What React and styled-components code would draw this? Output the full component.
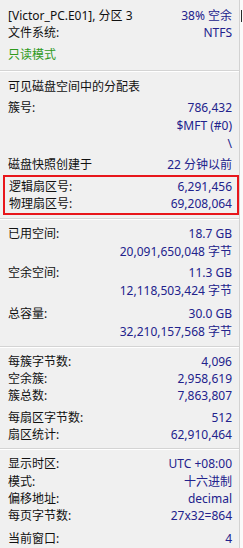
import React from "react";
import styled, { createGlobalStyle } from "styled-components";

const Global = createGlobalStyle`
  html, body { margin: 0; padding: 0; background: #f0f0f0; }
  body { font-family: "Noto Sans", "Noto Sans CJK SC", sans-serif; }
`;

const Page = styled.div`
  display: flex;
  width: 243px;
  height: 548px;
  overflow: hidden;
  background: #fafafa;
`;

const Panel = styled.div`
  width: 239px;
  flex: none;
  background: #f0f0f0;
  border-right: 1px solid #d2d2d2;
  padding-top: 7px;
  box-sizing: content-box;
  display: flex;
  flex-direction: column;
`;

const Strip = styled.div`
  flex: 1;
  display: flex;
  justify-content: center;
`;

const Caret = styled.div`
  width: 1px;
  height: 12px;
  margin-top: 10px;
  background: #2a2a2a;
`;

const Row = styled.div`
  display: flex;
  justify-content: space-between;
  align-items: center;
  height: 17px;
  line-height: 17px;
  font-size: 12px;
  padding: 0 7px 0 8px;
  margin-top: ${(p) => p.$gap || 0}px;
  white-space: nowrap;
`;

const Label = styled.span`
  color: ${(p) => (p.$green ? "#2f9a1c" : "#111")};
`;

const Value = styled.span`
  color: #22228c;
`;

const Sep = styled.div`
  height: 0;
  border-top: 1px solid #d4d4d4;
  border-bottom: 1px solid #ffffff;
  margin-top: ${(p) => p.$gap || 0}px;
`;

const Box = styled.div`
  margin: 2px 0 0 3px;
  border: 2px solid #e8161b;
  padding: 1px 0;
  ${Row} {
    padding: 0 5px 0 4px;
  }
`;

const Line = ({ label, value, gap, green }) => (
  <Row $gap={gap}>
    <Label $green={green}>{label}</Label>
    {value !== undefined && <Value>{value}</Value>}
  </Row>
);

export default function App() {
  return (
    <>
      <Global />
      <Page>
        <Panel>
          <Line label="[Victor_PC.E01], 分区 3" value="38% 空余" />
          <Line label="文件系统:" value="NTFS" />
          <Line label="只读模式" green gap={5} />
          <Sep $gap={7} />
          <Line label="可见磁盘空间中的分配表" gap={6} />
          <Line label="簇号:" value="786,432" gap={4} />
          <Line label="" value="$MFT (#0)" gap={1} />
          <Line label="" value="\" gap={1} />
          <Line label="磁盘快照创建于" value="22 分钟以前" gap={4} />
          <Box>
            <Line label="逻辑扇区号:" value="6,291,456" />
            <Line label="物理扇区号:" value="69,208,064" />
          </Box>
          <Sep $gap={3} />
          <Line label="已用空间:" value="18.7 GB" gap={5} />
          <Line label="" value="20,091,650,048 字节" gap={1} />
          <Line label="空余空间:" value="11.3 GB" gap={4} />
          <Line label="" value="12,118,503,424 字节" gap={1} />
          <Line label="总容量:" value="30.0 GB" gap={6} />
          <Line label="" value="32,210,157,568 字节" gap={1} />
          <Sep $gap={6} />
          <Line label="每簇字节数:" value="4,096" gap={5} />
          <Line label="空余簇:" value="2,958,619" />
          <Line label="簇总数:" value="7,863,807" />
          <Line label="每扇区字节数:" value="512" gap={5} />
          <Line label="扇区统计:" value="62,910,464" />
          <Sep $gap={5} />
          <Line label="显示时区:" value="UTC +08:00" gap={5} />
          <Line label="模式:" value="十六进制" gap={1} />
          <Line label="偏移地址:" value="decimal" />
          <Line label="每页字节数:" value="27x32=864" />
          <Line label="当前窗口:" value="4" gap={6} />
        </Panel>
        <Strip>
          <Caret />
        </Strip>
      </Page>
    </>
  );
}
